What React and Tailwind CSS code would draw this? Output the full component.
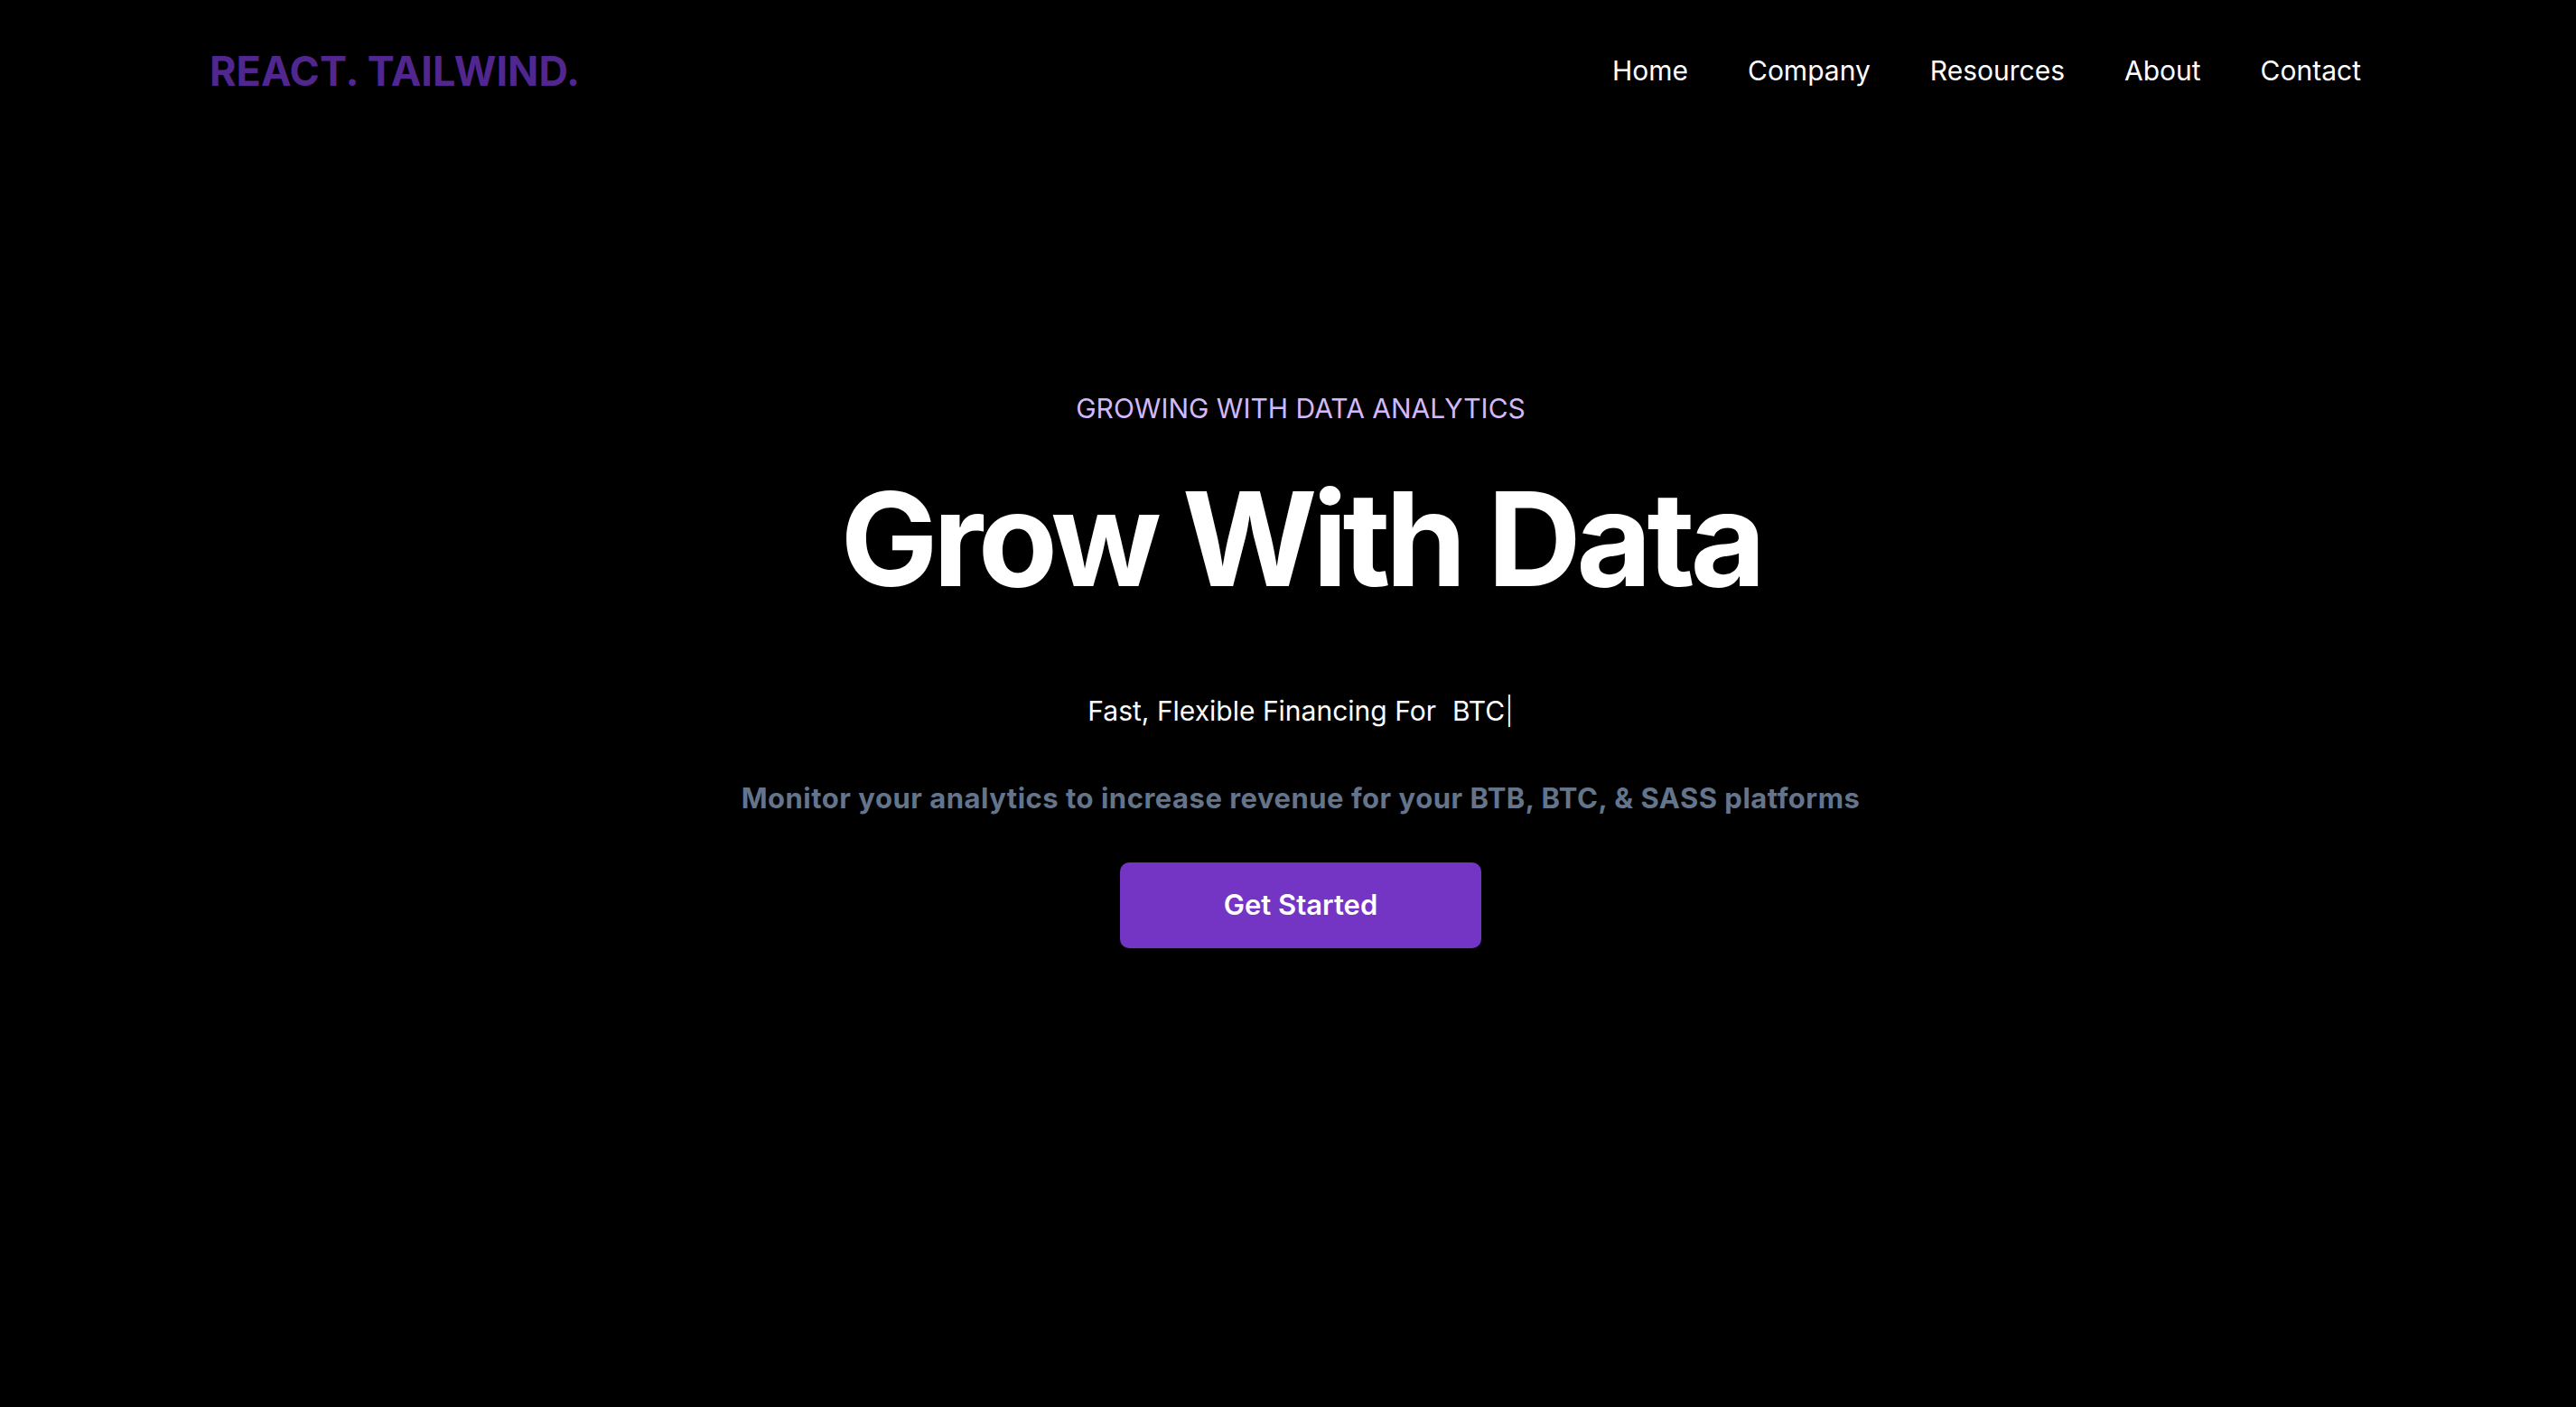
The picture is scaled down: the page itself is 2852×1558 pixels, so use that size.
import React from "react";

const links = ["Home", "Company", "Resources", "About", "Contact"];

function Navbar() {
  return (
    <header className="flex h-[156px] items-center justify-between pl-[232px] pr-[205px] text-white">
      <h1 className="text-[45px] font-bold leading-none text-[#51268f]">
        REACT. TAILWIND.
      </h1>
      <ul className="flex">
        {links.map((item) => (
          <li key={item} className="px-[33px] text-[30px] leading-none">
            {item}
          </li>
        ))}
      </ul>
    </header>
  );
}

function Hero() {
  return (
    <section className="flex flex-col items-center pl-[28px] text-center text-white">
      <p className="mt-[280px] text-[30px] leading-[32px] text-[#d3b8fb]">
        GROWING WITH DATA ANALYTICS
      </p>
      <h1 className="mt-[57px] text-[144px] font-bold leading-[144px] tracking-[-5.5px]">
        Grow With Data
      </h1>
      <div className="mt-[102px] flex items-center text-[30px] leading-[32px]">
        <p>Fast, Flexible Financing For</p>
        <span className="pl-[18px]">BTC</span>
        <span className="font-light text-white">|</span>
      </div>
      <p className="mt-[65px] text-[31px] font-bold leading-[32px] tracking-[0.5px] text-[#64748b]">
        Monitor your analytics to increase revenue for your BTB, BTC, &amp; SASS platforms
      </p>
      <button className="mt-[55px] h-[95px] w-[400px] rounded-[10px] bg-[#7434c4] text-[31px] font-semibold text-white">
        Get Started
      </button>
    </section>
  );
}

export default function App() {
  return (
    <div className="min-h-[1558px] bg-black font-['Inter',sans-serif]">
      <Navbar />
      <Hero />
    </div>
  );
}
